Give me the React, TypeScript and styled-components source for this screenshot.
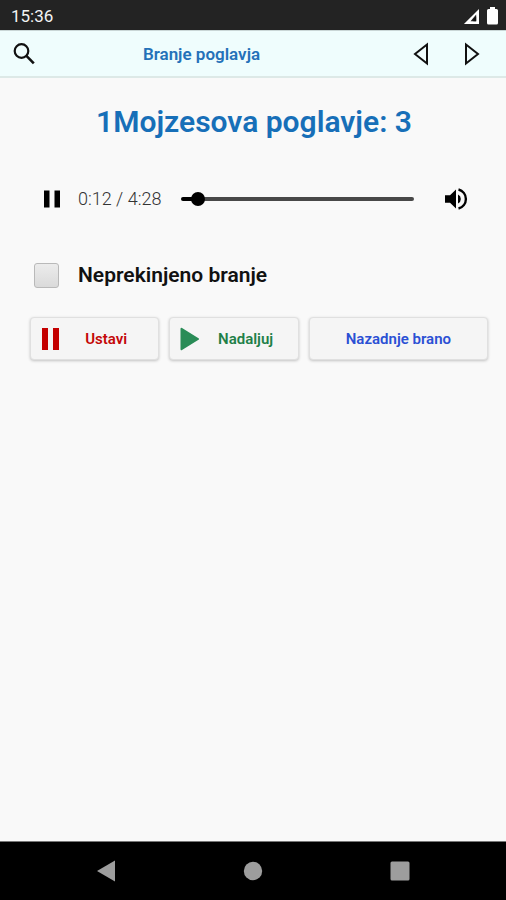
import React, { useState } from "react";
import styled, { createGlobalStyle } from "styled-components";

const GlobalStyle = createGlobalStyle`
  *, *::before, *::after { box-sizing: border-box; }
  body { margin: 0; background: #f9f9f9; }
  button, input { font: inherit; margin: 0; }
`;

const Screen = styled.div`
  display: flex;
  flex-direction: column;
  min-height: 100vh;
  background: #f9f9f9;
  color: #111;
  font-family: Roboto, "Liberation Sans", sans-serif;
`;

const StatusBar = styled.div`
  display: flex;
  align-items: center;
  justify-content: space-between;
  height: 30px;
  padding: 2px 8px 0 11px;
  background: #232323;
  color: #f4f4f4;
  font-size: 17px;
  line-height: 28px;
`;

const StatusIcons = styled.div`
  display: flex;
  align-items: center;
  gap: 8px;
`;

const Toolbar = styled.header`
  display: flex;
  align-items: center;
  height: 48px;
  padding-right: 9px;
  background: #effdfd;
  border-top: 1px solid #c9d6d6;
  border-bottom: 2px solid #dde9e7;
`;

const IconButton = styled.button<{ $width: number }>`
  display: flex;
  align-items: center;
  justify-content: center;
  flex: none;
  width: ${(p) => p.$width}px;
  height: 44px;
  padding: 0;
  border: 0;
  background: none;
  color: #111;
`;

const ToolbarTitle = styled.div`
  flex: 1;
  padding-right: 40px;
  color: #2471b9;
  font-size: 17px;
  font-weight: 600;
  line-height: 24px;
  text-align: center;
`;

const Content = styled.main`
  flex: 1;
  padding: 24px 18px 24px 30px;
`;

const Heading = styled.h1`
  margin: 0;
  padding-right: 10px;
  color: #176fb8;
  font-size: 30px;
  font-weight: 600;
  line-height: 40px;
  text-align: center;
`;

const Player = styled.div`
  display: flex;
  align-items: center;
  height: 44px;
  margin-top: 35px;
  padding-right: 10px;
`;

const Time = styled.span`
  flex: none;
  width: 107px;
  padding-left: 4px;
  color: #333;
  font-size: 18px;
  font-weight: 300;
  line-height: 24px;
`;

const Seek = styled.input<{ $progress: number }>`
  flex: 1;
  min-width: 0;
  height: 14px;
  appearance: none;
  background: none;

  &::-webkit-slider-runnable-track {
    height: 4px;
    border-radius: 2px;
    background: linear-gradient(
      to right,
      #000 ${(p) => p.$progress}%,
      #484848 ${(p) => p.$progress}%
    );
  }

  &::-webkit-slider-thumb {
    appearance: none;
    width: 14px;
    height: 14px;
    margin-top: -5px;
    border-radius: 50%;
    background: #000;
  }
`;

const VolumeButton = styled(IconButton)`
  margin-left: 20px;
`;

const ContinuousRow = styled.label`
  display: flex;
  align-items: center;
  gap: 19px;
  height: 32px;
  margin-top: 38px;
  padding-left: 4px;
  font-size: 21px;
  font-weight: 600;
  line-height: 28px;
`;

const Checkbox = styled.input`
  appearance: none;
  width: 25px;
  height: 25px;
  border: 1px solid #b9b9b9;
  border-radius: 3px;
  background: linear-gradient(#ececec, #dadada);

  &:checked {
    background: #2471b9;
  }
`;

const Actions = styled.div`
  display: grid;
  grid-template-columns: 13fr 13fr 18fr;
  gap: 10px;
  margin-top: 26px;
`;

const ActionButton = styled.button<{ $color: string }>`
  display: flex;
  align-items: center;
  min-width: 0;
  height: 43px;
  padding: 0 6px;
  border: 1px solid #e0e0e0;
  border-radius: 4px;
  background: #f5f5f5;
  box-shadow: 0 1px 3px rgba(0, 0, 0, 0.22);
  color: ${(p) => p.$color};
  font-size: 15px;
  font-weight: 600;
  line-height: 20px;

  svg {
    flex: none;
    margin-left: 4px;
  }
`;

const ActionText = styled.span`
  flex: 1;
  text-align: center;
`;

const SystemNav = styled.nav`
  display: flex;
  height: 59px;
  padding: 0 33px;
  border-top: 1px solid #777;
  background: #000;
`;

const SystemButton = styled.button`
  display: flex;
  flex: 1;
  align-items: center;
  justify-content: center;
  padding: 0;
  border: 0;
  background: none;
  color: #9d9d9d;
`;

const DURATION = 268;

const formatTime = (seconds: number) =>
  `${Math.floor(seconds / 60)}:${String(seconds % 60).padStart(2, "0")}`;

export default function App() {
  const [position, setPosition] = useState(12);
  const [continuous, setContinuous] = useState(false);

  return (
    <Screen>
      <GlobalStyle />
      <StatusBar>
        <span>15:36</span>
        <StatusIcons>
          <svg width="16" height="17" viewBox="0 0 17 18" aria-hidden="true">
            <path d="M17 1v16H1z" fill="#fff" />
            <path d="M14 7v7H8z" fill="#232323" />
            <path d="M14 9v5h-3v-2z" fill="#111" />
          </svg>
          <svg width="11" height="18" viewBox="0 0 11 18" aria-hidden="true">
            <path d="M3 0h5v2h1.500a1.500 1.500 0 0 1 1.500 1.500V16a1.500 1.500 0 0 1-1.500 1.500h-8A1.500 1.500 0 0 1 0 16V3.500A1.500 1.500 0 0 1 1.500 2H3z" fill="#fff" />
          </svg>
        </StatusIcons>
      </StatusBar>

      <Toolbar>
        <IconButton $width={48} type="button" aria-label="Iskanje">
          <svg width="22" height="22" viewBox="0 0 22 22" fill="none" stroke="currentColor" strokeWidth="2.200" aria-hidden="true">
            <circle cx="8.500" cy="8" r="6.800" />
            <path d="M13.200 12.700l7.600 7.600" strokeWidth="2.600" />
          </svg>
        </IconButton>
        <ToolbarTitle>Branje poglavja</ToolbarTitle>
        <IconButton $width={51} type="button" aria-label="Prejšnje poglavje">
          <svg width="16" height="24" viewBox="0 0 16 24" fill="none" stroke="currentColor" strokeWidth="2" aria-hidden="true">
            <path d="M14 2.500v19L2 12z" />
          </svg>
        </IconButton>
        <IconButton $width={51} type="button" aria-label="Naslednje poglavje">
          <svg width="16" height="24" viewBox="0 0 16 24" fill="none" stroke="currentColor" strokeWidth="2" aria-hidden="true">
            <path d="M2 2.500v19L14 12z" />
          </svg>
        </IconButton>
      </Toolbar>

      <Content>
        <Heading>1Mojzesova poglavje: 3</Heading>

        <Player>
          <IconButton $width={44} type="button" aria-label="Premor">
            <svg width="16" height="18" viewBox="0 0 16 18" fill="#000" aria-hidden="true">
              <path d="M0 0.500h5.500v17H0zM10.500 0.500H16v17h-5.500z" />
            </svg>
          </IconButton>
          <Time>
            {formatTime(position)} / {formatTime(DURATION)}
          </Time>
          <Seek
            type="range"
            aria-label="Položaj predvajanja"
            min={0}
            max={DURATION}
            value={position}
            $progress={Math.round((position / DURATION) * 94) + 3}
            onChange={(e) => setPosition(Number(e.target.value))}
          />
          <VolumeButton $width={44} type="button" aria-label="Glasnost">
            <svg width="24" height="24" viewBox="0 0 24 24" fill="#000" aria-hidden="true">
              <path d="M1 8.300h5L12 2.500v19l-6-5.800H1z" />
              <path d="M14 7.500a5 5 0 0 1 0 9z" />
              <path d="M14.500 2.500a9.800 9.800 0 0 1 0 19" fill="none" stroke="#000" strokeWidth="2.400" />
            </svg>
          </VolumeButton>
        </Player>

        <ContinuousRow>
          <Checkbox
            type="checkbox"
            checked={continuous}
            onChange={(e) => setContinuous(e.target.checked)}
          />
          Neprekinjeno branje
        </ContinuousRow>

        <Actions>
          <ActionButton $color="#c40808" type="button">
            <svg width="19" height="22" viewBox="0 0 19 22" fill="#c40000" aria-hidden="true">
              <path d="M1 0h6v22H1zM12 0h6v22h-6z" />
            </svg>
            <ActionText>Ustavi</ActionText>
          </ActionButton>
          <ActionButton $color="#1f8048" type="button">
            <svg width="19" height="24" viewBox="0 0 19 24" fill="#2a8c57" stroke="#2a8c57" strokeWidth="2" strokeLinejoin="round" aria-hidden="true">
              <path d="M1.500 1.800L18 12 1.500 22.200z" />
            </svg>
            <ActionText>Nadaljuj</ActionText>
          </ActionButton>
          <ActionButton $color="#2b50d4" type="button">
            <ActionText>Nazadnje brano</ActionText>
          </ActionButton>
        </Actions>
      </Content>

      <SystemNav aria-label="Sistemska navigacija">
        <SystemButton type="button" aria-label="Nazaj">
          <svg width="20" height="22" viewBox="0 0 20 22" fill="currentColor" aria-hidden="true">
            <path d="M19 0.500v21L1 11z" />
          </svg>
        </SystemButton>
        <SystemButton type="button" aria-label="Domov">
          <svg width="20" height="20" viewBox="0 0 20 20" fill="currentColor" aria-hidden="true">
            <circle cx="10" cy="10" r="9.200" />
          </svg>
        </SystemButton>
        <SystemButton type="button" aria-label="Nedavno">
          <svg width="20" height="20" viewBox="0 0 20 20" fill="currentColor" aria-hidden="true">
            <rect x="0.500" y="0.500" width="19" height="19" rx="1.500" />
          </svg>
        </SystemButton>
      </SystemNav>
    </Screen>
  );
}
